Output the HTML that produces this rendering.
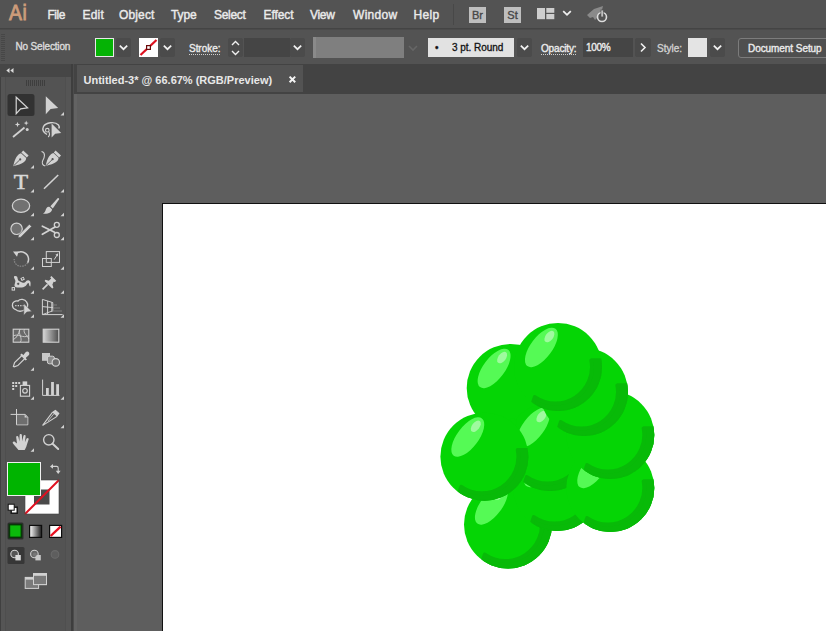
<!DOCTYPE html>
<html lang="en">
<head>
<meta charset="utf-8">
<title>Untitled-3* @ 66.67% (RGB/Preview)</title>
<style>
*{box-sizing:border-box;margin:0;padding:0}
html,body{width:826px;height:631px;overflow:hidden;background:#5d5d5d;font-family:"Liberation Sans",sans-serif;}
#app{position:relative;width:826px;height:631px;overflow:hidden;background:#5d5d5d}
.abs{position:absolute}
#menubar{left:0;top:0;width:826px;height:30px;background:#535353}
#menusep{left:0;top:28px;width:826px;height:2px;background:linear-gradient(to bottom,#444 0,#444 1px,#4b4b4b 1px,#4b4b4b 2px)}
#ctrlbar{left:0;top:30px;width:826px;height:34px;background:#535353}
#strip{left:0;top:64px;width:826px;height:30px;background:#434343}
#tools{left:0;top:64px;width:71px;height:567px;background:linear-gradient(to right,#404040 0,#404040 1px,#555 1px,#555 5.5px,#4e4e4e 5.5px,#4e4e4e 6.5px,#535353 6.5px,#535353 65px,#4f4f4f 65px,#4f4f4f 66px,#555 66px,#555 71px)}
#toolhead{left:0;top:64px;width:71px;height:13px;background:#464646}
#toolsep{left:71px;top:64px;width:3px;height:567px;background:linear-gradient(to right,#3e3e3e 0,#3e3e3e 2px,#4c4c4c 2px,#4c4c4c 3px)}
#tab{left:77px;top:65px;width:226px;height:27px;background:#535353}
#canvas{left:74px;top:94px;width:752px;height:537px;background:#5e5e5e;border-left:3px solid #636363}
#artboard{left:162px;top:203px;width:700px;height:500px;background:#fff;border:1px solid #111}
.mi{position:absolute;top:7px;font-size:12px;line-height:16px;color:#ebebeb;white-space:nowrap;-webkit-text-stroke:0.4px #ebebeb}
.ct{position:absolute;font-size:10px;line-height:12px;color:#e8e8e8;white-space:nowrap;font-weight:bold}

.box{position:absolute}
.chev{position:absolute;width:15px;height:19px;background:#4b4b4b;border-radius:2px}
.chev svg{position:absolute;left:0;top:0}
.lbl{position:absolute;top:42px;font-size:10px;line-height:12px;color:#ececec;white-space:nowrap;-webkit-text-stroke:0.35px currentColor}
.dot{border-bottom:1px dotted #cfcfcf;padding-bottom:0px;line-height:11px}
</style>
</head>
<body>
<div id="app">
  <div id="canvas" class="abs"></div>
  <div id="artboard" class="abs"></div>
<!--GRAPES-->
  <svg id="grapes" class="abs" style="left:0;top:0" width="826" height="631" viewBox="0 0 826 631">
    <defs><clipPath id="gc"><circle r="44"/></clipPath></defs>
    <g transform="translate(508 524.5)"><g><circle r="44" fill="#05d505"/><g clip-path="url(#gc)"><path d="M44.51 -6.65 A45 45 0 0 1 -25.49 37.09 L-23.17 30.08 A36.5 36.5 0 0 0 33.39 -6.65 Z" fill="#08ba08" stroke="#08ba08" stroke-width="4" stroke-linejoin="round"/></g><ellipse cx="-16.6" cy="-19.6" rx="10.7" ry="23.4" transform="rotate(37 -16.6 -19.6)" fill="#55fa55"/><ellipse cx="-8.6" cy="-30.4" rx="3.8" ry="6.6" transform="rotate(37 -8.6 -30.4)" fill="#9ffa9f"/></g></g>
    <g transform="translate(557 487)"><g><circle r="44" fill="#05d505"/><g clip-path="url(#gc)"><path d="M44.51 -6.65 A45 45 0 0 1 -25.49 37.09 L-23.17 30.08 A36.5 36.5 0 0 0 33.39 -6.65 Z" fill="#08ba08" stroke="#08ba08" stroke-width="4" stroke-linejoin="round"/></g><ellipse cx="-16.6" cy="-19.6" rx="10.7" ry="23.4" transform="rotate(37 -16.6 -19.6)" fill="#55fa55"/><ellipse cx="-8.6" cy="-30.4" rx="3.8" ry="6.6" transform="rotate(37 -8.6 -30.4)" fill="#9ffa9f"/></g></g>
    <g transform="translate(510.7 388)"><g><circle r="44" fill="#05d505"/><g clip-path="url(#gc)"><path d="M44.51 -6.65 A45 45 0 0 1 -25.49 37.09 L-23.17 30.08 A36.5 36.5 0 0 0 33.39 -6.65 Z" fill="#08ba08" stroke="#08ba08" stroke-width="4" stroke-linejoin="round"/></g><ellipse cx="-16.6" cy="-19.6" rx="10.7" ry="23.4" transform="rotate(37 -16.6 -19.6)" fill="#55fa55"/><ellipse cx="-8.6" cy="-30.4" rx="3.8" ry="6.6" transform="rotate(37 -8.6 -30.4)" fill="#9ffa9f"/></g></g>
    <g transform="translate(550 447)"><g><circle r="44" fill="#05d505"/><g clip-path="url(#gc)"><path d="M44.51 -6.65 A45 45 0 0 1 -25.49 37.09 L-23.17 30.08 A36.5 36.5 0 0 0 33.39 -6.65 Z" fill="#08ba08" stroke="#08ba08" stroke-width="4" stroke-linejoin="round"/></g><ellipse cx="-16.6" cy="-19.6" rx="10.7" ry="23.4" transform="rotate(37 -16.6 -19.6)" fill="#55fa55"/><ellipse cx="-8.6" cy="-30.4" rx="3.8" ry="6.6" transform="rotate(37 -8.6 -30.4)" fill="#9ffa9f"/></g></g>
    <g transform="translate(610.3 488)"><g><circle r="44" fill="#05d505"/><g clip-path="url(#gc)"><path d="M44.51 -6.65 A45 45 0 0 1 -25.49 37.09 L-23.17 30.08 A36.5 36.5 0 0 0 33.39 -6.65 Z" fill="#08ba08" stroke="#08ba08" stroke-width="4" stroke-linejoin="round"/></g><ellipse cx="-16.6" cy="-19.6" rx="10.7" ry="23.4" transform="rotate(37 -16.6 -19.6)" fill="#55fa55"/><ellipse cx="-8.6" cy="-30.4" rx="3.8" ry="6.6" transform="rotate(37 -8.6 -30.4)" fill="#9ffa9f"/></g></g>
    <g transform="translate(610.3 435)"><g><circle r="44" fill="#05d505"/><g clip-path="url(#gc)"><path d="M44.51 -6.65 A45 45 0 0 1 -25.49 37.09 L-23.17 30.08 A36.5 36.5 0 0 0 33.39 -6.65 Z" fill="#08ba08" stroke="#08ba08" stroke-width="4" stroke-linejoin="round"/></g><ellipse cx="-16.6" cy="-19.6" rx="10.7" ry="23.4" transform="rotate(37 -16.6 -19.6)" fill="#55fa55"/><ellipse cx="-8.6" cy="-30.4" rx="3.8" ry="6.6" transform="rotate(37 -8.6 -30.4)" fill="#9ffa9f"/></g></g>
    <g transform="translate(584 392)"><g><circle r="44" fill="#05d505"/><g clip-path="url(#gc)"><path d="M44.51 -6.65 A45 45 0 0 1 -25.49 37.09 L-23.17 30.08 A36.5 36.5 0 0 0 33.39 -6.65 Z" fill="#08ba08" stroke="#08ba08" stroke-width="4" stroke-linejoin="round"/></g><ellipse cx="-16.6" cy="-19.6" rx="10.7" ry="23.4" transform="rotate(37 -16.6 -19.6)" fill="#55fa55"/><ellipse cx="-8.6" cy="-30.4" rx="3.8" ry="6.6" transform="rotate(37 -8.6 -30.4)" fill="#9ffa9f"/></g></g>
    <g transform="translate(558 367)"><g><circle r="44" fill="#05d505"/><g clip-path="url(#gc)"><path d="M44.51 -6.65 A45 45 0 0 1 -25.49 37.09 L-23.17 30.08 A36.5 36.5 0 0 0 33.39 -6.65 Z" fill="#08ba08" stroke="#08ba08" stroke-width="4" stroke-linejoin="round"/></g><ellipse cx="-16.6" cy="-19.6" rx="10.7" ry="23.4" transform="rotate(37 -16.6 -19.6)" fill="#55fa55"/><ellipse cx="-8.6" cy="-30.4" rx="3.8" ry="6.6" transform="rotate(37 -8.6 -30.4)" fill="#9ffa9f"/></g></g>
    <circle cx="512.5" cy="422.5" r="4" fill="#05d505"/>
    <g transform="translate(484.4 456.7)"><g><circle r="44" fill="#05d505"/><g clip-path="url(#gc)"><path d="M44.51 -6.65 A45 45 0 0 1 -25.49 37.09 L-23.17 30.08 A36.5 36.5 0 0 0 33.39 -6.65 Z" fill="#08ba08" stroke="#08ba08" stroke-width="4" stroke-linejoin="round"/></g><ellipse cx="-16.6" cy="-19.6" rx="10.7" ry="23.4" transform="rotate(37 -16.6 -19.6)" fill="#55fa55"/><ellipse cx="-8.6" cy="-30.4" rx="3.8" ry="6.6" transform="rotate(37 -8.6 -30.4)" fill="#9ffa9f"/></g></g>
  </svg>
<!--/GRAPES-->
  <div id="strip" class="abs"></div>
  <div id="tab" class="abs"><span id="tabtxt" style="position:absolute;top:8.5px;left:6.5px;font-size:11px;line-height:13px;font-weight:bold;color:#e8e8e8;white-space:nowrap">Untitled-3* @ 66.67% (RGB/Preview)</span><svg style="position:absolute;left:211px;top:10px" width="9" height="9" viewBox="0 0 9 9"><path d="M1.6 1.6 L7.2 7.2 M7.2 1.6 L1.6 7.2" stroke="#f4f4f4" stroke-width="2" fill="none"/></svg></div>
  <div id="tools" class="abs"></div>
  <div id="toolhead" class="abs"></div>
  <div id="toolsep" class="abs"></div>
<!--TOOLS-->
  <svg id="toolsvg" class="abs" style="left:0;top:0" width="76" height="631" viewBox="0 0 76 631">
    <defs><linearGradient id="tg" x1="0" x2="1" y1="0" y2="0"><stop offset="0" stop-color="#d6d6d6"/><stop offset="1" stop-color="#4c4c4c"/></linearGradient><linearGradient id="gg" x1="0" x2="1" y1="0" y2="0"><stop offset="0" stop-color="#ffffff"/><stop offset="1" stop-color="#1a1a1a"/></linearGradient></defs>

    <g fill="#d2d2d2" stroke="none">
      <!-- collapse chevrons -->
      <path d="M9.5 68 L6.3 70.5 L9.5 73 Z M13.5 68 L10.3 70.5 L13.5 73 Z" fill="#dadada"/>
      <!-- grip -->
      <g fill="#3e3e3e"><rect x="26" y="80" width="1" height="6"/><rect x="28" y="80" width="1" height="6"/><rect x="30" y="80" width="1" height="6"/><rect x="32" y="80" width="1" height="6"/><rect x="34" y="80" width="1" height="6"/><rect x="36" y="80" width="1" height="6"/><rect x="38" y="80" width="1" height="6"/><rect x="40" y="80" width="1" height="6"/><rect x="42" y="80" width="1" height="6"/><rect x="44" y="80" width="1" height="6"/></g>
      <!-- selected tool bg -->
      <rect x="7.5" y="94" width="27" height="22" rx="2.5" fill="#323232"/>
      <!-- selection arrow -->
      <path d="M16.2 97.2 L16.2 113.6 L20.6 108.8 L27.6 107.8 Z" fill="none" stroke="#d6d6d6" stroke-width="1.2" stroke-linejoin="miter"/>
      <!-- direct selection -->
      <path d="M45.8 96.2 L45.8 114.2 L50.6 109 L58.2 107.9 Z"/>
      <path id="tri" d="M64 112 L64 115.5 L60.5 115.5 Z"/>
      <!-- magic wand -->
      <path d="M13 137 L24.5 127.5" stroke="#d2d2d2" stroke-width="1.8" fill="none"/>
      <path d="M17.5 121.8 L18.2 123.8 L20.2 124.5 L18.2 125.2 L17.5 127.2 L16.8 125.2 L14.8 124.5 L16.8 123.8 Z"/>
      <path d="M26.2 120.6 L26.9 122.4 L28.7 123.1 L26.9 123.8 L26.2 125.6 L25.5 123.8 L23.7 123.1 L25.5 122.4 Z"/>
      <circle cx="27.2" cy="129.6" r="1.5"/>
      <!-- lasso + arrow -->
      <path d="M47 134.5 C43.5 132.5 42 129.5 43.5 126.5 C45.5 122.5 55 121 58.5 125 C59.5 126.3 59.3 127.5 58.8 128.5" fill="none" stroke="#d2d2d2" stroke-width="1.4"/>
      <circle cx="47.3" cy="130.2" r="1.8" fill="none" stroke="#d2d2d2" stroke-width="1.1"/>
      <path d="M48.6 131.5 C49.8 133.2 49.6 135.5 48.2 137" fill="none" stroke="#d2d2d2" stroke-width="1.1"/>
      <path d="M51.6 123.6 L51.6 137.6 L55.2 133.8 L61.2 132.9 Z"/>

      <!-- pen tool -->
      <g id="pen">
        <path d="M23.2 150.6 L28.6 155.6 L26.8 157.6 L21.4 152.6 Z"/>
        <path d="M21 153.2 L26.2 158 C26 161.5 23 164 13.2 166.2 C15 157.5 17.5 154.5 21 153.2 Z"/>
        <path d="M13.6 165.8 L19.6 160" stroke="#535353" stroke-width="0.9" fill="none"/>
        <circle cx="20.2" cy="159.4" r="1.1" fill="#535353"/>
      </g>
      <path d="M34 165 L34 168.5 L30.5 168.5 Z"/>
      <!-- curvature tool -->
      <path d="M41.5 151.5 C46 152.5 44.5 157.5 42.8 160.5 C41.5 163 42.5 165.5 45.2 166" fill="none" stroke="#d2d2d2" stroke-width="1.1"/>
      <g transform="translate(32.4,-0.2)">
        <path d="M23.2 150.6 L28.6 155.6 L26.8 157.6 L21.4 152.6 Z"/>
        <path d="M21 153.2 L26.2 158 C26 161.5 23 164 13.2 166.2 C15 157.5 17.5 154.5 21 153.2 Z"/>
        <path d="M13.6 165.8 L19.6 160" stroke="#535353" stroke-width="0.9" fill="none"/>
        <circle cx="20.2" cy="159.4" r="1.1" fill="#535353"/>
      </g>
      <!-- type tool -->
      <text x="20.9" y="189" font-family="Liberation Serif, serif" font-size="21" text-anchor="middle" fill="#d8d8d8" stroke="#d8d8d8" stroke-width="0.5" textLength="14.4" lengthAdjust="spacingAndGlyphs">T</text>
      <path d="M34 189 L34 192.5 L30.5 192.5 Z"/>
      <!-- line tool -->
      <path d="M44 188.8 L58.2 175" stroke="#d2d2d2" stroke-width="1.6" fill="none"/>
      <path d="M64 189 L64 192.5 L60.5 192.5 Z"/>
      <!-- ellipse tool -->
      <ellipse cx="21" cy="205.8" rx="8.7" ry="6.6" fill="#717171" stroke="#d2d2d2" stroke-width="1.2"/>
      <path d="M34 212.8 L34 216.3 L30.5 216.3 Z"/>
      <!-- paintbrush -->
      <path d="M50.4 206.2 L57.6 198.2 C58.4 197.4 59.6 198.4 59 199.4 L52.8 208.4 Z"/>
      <path d="M49.6 207 L52 209.2 C52 212 49 214.2 43 213.8 C45.5 212.5 45.5 209.5 46.6 208 C47.4 207 48.6 206.6 49.6 207 Z"/>
      <path d="M64 212.8 L64 216.3 L60.5 216.3 Z"/>
      <!-- shaper tool -->
      <circle cx="16.6" cy="228.8" r="5.7" fill="#717171" stroke="#d2d2d2" stroke-width="1.2"/>
      <path d="M18.6 235 L29.4 224.2 L31.6 226.4 L20.8 237.2 L18 237.8 Z" stroke="#535353" stroke-width="0.6"/>
      <path d="M34 236.8 L34 240.3 L30.5 240.3 Z"/>
      <!-- scissors -->
      <path d="M42.4 226.2 L54.6 232.2" stroke="#d2d2d2" stroke-width="1.8" fill="none" stroke-linecap="round"/>
      <path d="M42.4 234.2 L55 227" stroke="#d2d2d2" stroke-width="1.8" fill="none" stroke-linecap="round"/>
      <circle cx="56.8" cy="224.8" r="2.5" fill="none" stroke="#d2d2d2" stroke-width="1.3"/>
      <circle cx="56.8" cy="235" r="2.5" fill="none" stroke="#d2d2d2" stroke-width="1.3"/>
      <path d="M64 236.8 L64 240.3 L60.5 240.3 Z"/>
      <!-- rotate -->
      <path d="M16 253.5 C20 250.5 26 251.5 28 256.5 C29 259 28.6 261 27.6 262.8" fill="none" stroke="#d2d2d2" stroke-width="1.5"/>
      <path d="M13 251.6 L18.6 251.6 L17 256.8 Z"/>
      <path d="M27.6 262.8 C25 267 18.5 267.5 15.5 263.5 C14.5 262 14 260.5 14.2 259" fill="none" stroke="#8a8a8a" stroke-width="1.2" stroke-dasharray="1.5 1"/>
      <path d="M34 266.3 L34 269.8 L30.5 269.8 Z"/>
      <!-- scale -->
      <rect x="46.3" y="251.6" width="13.2" height="10.8" fill="none" stroke="#d2d2d2" stroke-width="1"/>
      <rect x="42.5" y="258.5" width="8.8" height="8" fill="none" stroke="#d2d2d2" stroke-width="1"/>
      <path d="M54.2 259.6 L57.4 254.6" stroke="#d2d2d2" stroke-width="1" fill="none"/>
      <path d="M58.2 253.2 L57.8 256.4 L55.4 254.8 Z"/>
      <path d="M64 266.3 L64 269.8 L60.5 269.8 Z"/>
      <!-- width tool -->
      <path d="M14 276.4 C16.2 275.6 17.4 276.6 17.6 278.4 C17.8 280 18.6 281 20 281.4 C22 282 23.4 283.4 24.6 282.6 C26 281.6 26.6 280 28.4 280.2 C30.2 280.4 30.8 282 30.6 284 C30.4 285.4 30.6 286 30.2 286.4 C29 286 29.4 284.6 28.8 283.4 C28.2 282.4 27.4 283.4 26.8 284.6 C25.8 286.6 23.6 287.6 21 287.4 C18.4 287.2 16 287.6 14.8 286.4 C13.8 285.4 15.4 283 15.4 281 C15.4 279.4 13.6 278 14 276.4 Z"/>
      <circle cx="18.2" cy="283.8" r="1.5" fill="#535353" stroke="#e0e0e0" stroke-width="0.6"/>
      <rect x="21.3" y="277.7" width="2.6" height="2.3" fill="#535353" stroke="#e0e0e0" stroke-width="0.9" transform="rotate(-25 22.6 278.8)"/>
      <rect x="12.1" y="287.6" width="2.5" height="2.5" fill="#535353" stroke="#e0e0e0" stroke-width="0.9"/>
      <path d="M34 290.3 L34 293.8 L30.5 293.8 Z"/>
      <!-- pin -->
      <path d="M51.4 276 L56.2 280.8 L55 282 L53.6 281.8 L52.4 284.4 L53.4 287.8 L52.2 288.6 L44.6 281 L45.4 279.8 L48.8 280.8 L51.2 278.6 L50.2 277.2 Z"/>
      <path d="M47.6 284.4 L42.6 289.4" stroke="#d2d2d2" stroke-width="1.7" fill="none"/>
      <path d="M64 290.3 L64 293.8 L60.5 293.8 Z"/>
      <!-- shape builder -->
      <path d="M12.4 305.5 C12 302 15.5 300.5 18 301 C20 298.6 25 299 26.6 302 C28.6 304.5 27.6 308.5 25 309.6 C22 312 17.5 311.6 15.8 309.6 C13.6 309 12.6 307.5 12.4 305.5 Z" fill="none" stroke="#d2d2d2" stroke-width="1.3"/>
      <rect x="15.2" y="305" width="1.3" height="1.3"/><rect x="17.7" y="305" width="1.3" height="1.3"/><rect x="20.2" y="305" width="1.3" height="1.3"/><rect x="22.7" y="305" width="1.3" height="1.3"/>
      <path d="M23.8 303.6 L23.8 315.2 L26.8 312 L31.8 311.4 Z" stroke="#535353" stroke-width="0.5"/>
      <path d="M34 314.3 L34 317.8 L30.5 317.8 Z"/>
      <!-- perspective grid -->
      <path d="M42.4 299.4 L42.4 314.6 M42.4 299.4 L52.8 302.6 M42.4 306.6 L53 307.6 M42.4 314.6 L62.6 314.6 M47.6 301 L47.6 314 M51.8 302.4 L51.8 311.8" fill="none" stroke="#d2d2d2" stroke-width="1"/>
      <path d="M42.4 314.6 L52.8 310.8 M52.8 302.6 L52.8 310.8" fill="none" stroke="#d2d2d2" stroke-width="0.9"/>
      <path d="M53 305 L57 305 M53 308 L60 308 M52 311 L62 311" fill="none" stroke="#8a8a8a" stroke-width="0.8"/>
      <path d="M64 314.3 L64 317.8 L60.5 317.8 Z"/>
      <!-- mesh -->
      <rect x="13.2" y="329.2" width="15.6" height="13" fill="#6a6a6a" stroke="#d2d2d2" stroke-width="1.1"/>
      <path d="M13.2 336 C18 333 23 339 28.8 335.6 M20 329.2 C17.5 333 23 338 20.4 342.2 M13.2 339.6 C17 338 18.5 334 20 329.2 M24.5 329.2 C22.5 333 28 336 28.8 339" fill="none" stroke="#cfcfcf" stroke-width="0.9"/>
      <!-- gradient -->
      <rect x="43.2" y="329.2" width="15.6" height="13" fill="url(#tg)" stroke="#d2d2d2" stroke-width="1.1"/>
      <!-- eyedropper -->
      <path d="M13.4 366.4 L14.6 362.6 L22.4 355 L25.4 358 L17.8 365.6 L14.2 366.8 Z" fill="none" stroke="#d2d2d2" stroke-width="1.2"/>
      <path d="M21.4 353.6 L23.2 355.2 L25.4 352.4 C26.6 351.2 28.4 351.4 29 352.6 C29.6 353.8 29.4 355 28.2 355.8 L25.6 358 L27 359.6 L25.6 360.6 L20.2 355 Z"/>
      <path d="M34 367.3 L34 370.8 L30.5 370.8 Z"/>
      <!-- blend -->
      <rect x="42" y="353" width="8" height="7.8" fill="#c8c8c8"/>
      <rect x="47.4" y="356.2" width="7" height="7.6" rx="1.8" fill="#8a8a8a" stroke="#d2d2d2" stroke-width="1"/>
      <circle cx="55.8" cy="362.4" r="3.7" fill="#6a6a6a" stroke="#d2d2d2" stroke-width="1.2"/>
      <!-- symbol sprayer -->
      <rect x="12.2" y="382" width="2" height="2"/><rect x="15.2" y="382" width="2" height="2"/><rect x="18.2" y="382" width="2" height="2"/>
      <rect x="12.2" y="385" width="2" height="2"/><rect x="15.2" y="385" width="2" height="2"/>
      <rect x="12.2" y="388" width="2" height="2"/>
      <rect x="22.6" y="381.4" width="4.6" height="3.6"/>
      <rect x="20.4" y="385.4" width="9.2" height="10.8" fill="none" stroke="#d2d2d2" stroke-width="1.1"/>
      <circle cx="25" cy="390.8" r="2.3" fill="none" stroke="#d2d2d2" stroke-width="1.2"/>
      <path d="M34 396.3 L34 399.8 L30.5 399.8 Z"/>
      <!-- column graph -->
      <path d="M42.6 379.6 L42.6 395.4 L59.4 395.4" fill="none" stroke="#d2d2d2" stroke-width="1"/>
      <rect x="46" y="388" width="2.8" height="7"/>
      <rect x="51.1" y="382" width="2.8" height="13"/>
      <rect x="56.2" y="384.2" width="2.8" height="10.8"/>
      <path d="M64 396.3 L64 399.8 L60.5 399.8 Z"/>
      <!-- artboard -->
      <path d="M16.5 409 L16.5 424.8 L27.8 424.8 L27.8 417 L25 414.4 L10.6 414.4" fill="none" stroke="#d2d2d2" stroke-width="1"/>
      <path d="M17 415 L24.6 415 L27.2 417.4 L27.2 424.2 L17 424.2 Z" fill="#6e6e6e"/>
      <path d="M24.6 414.6 L24.6 417.4 L27.6 417.4 Z"/>
      <!-- slice -->
      <path d="M42.6 425.4 L52.2 412.6 L55.4 410.4 L58.8 413.4 L56.6 416.6 L44 424.6 Z" fill="none" stroke="#d2d2d2" stroke-width="1.1"/>
      <path d="M52.4 412.4 L55.4 410.2 L58.8 413.4 L56.8 416.2 Z"/>
      <path d="M48 421 L54 413.6" stroke="#d2d2d2" stroke-width="0.8" fill="none"/>
      <path d="M64 424.8 L64 428.3 L60.5 428.3 Z"/>
      <!-- hand -->
      <path d="M17 443.5 L16.2 437.4 C16 435.8 18 435.4 18.4 437 L19.4 441.4 L19.6 435.4 C19.6 433.6 21.8 433.6 21.9 435.4 L22.2 441.2 L23.4 436 C23.8 434.4 25.8 434.8 25.6 436.4 L24.9 442.2 L26.6 438.6 C27.4 437.2 29.2 438 28.6 439.6 L26.8 445 C26.2 447.6 25.2 449 24.6 450 L18.4 450 C17.4 448.4 15.2 446 13 443.4 C12 442 13.8 440.8 15 442 Z"/>
      <path d="M34 448.3 L34 451.8 L30.5 451.8 Z"/>
      <!-- zoom -->
      <circle cx="48.8" cy="439.8" r="5.2" fill="none" stroke="#d2d2d2" stroke-width="1.4"/>
      <path d="M52.6 443.8 L58.2 449" stroke="#d2d2d2" stroke-width="2" fill="none" stroke-linecap="round"/>
      <!-- stroke swatch -->
      <rect x="25" y="480" width="34" height="34" fill="#ffffff"/>
      <rect x="34" y="489.5" width="15.5" height="15" fill="#4a4a4a"/>
      <path d="M59 480 L25 514" stroke="#e01020" stroke-width="2" fill="none"/>
      <rect x="25" y="480" width="34" height="34" fill="none" stroke="#444" stroke-width="0.6"/>
      <!-- fill swatch -->
      <rect x="7.5" y="462.5" width="33" height="33" fill="#00b400" stroke="#f0f0f0" stroke-width="1"/>
      <!-- swap -->
      <path d="M52 466.4 L56.6 466.4 C57.6 466.4 58.2 467 58.2 468 L58.2 471" fill="none" stroke="#d2d2d2" stroke-width="1.1"/>
      <path d="M50 466.4 L53 464 L53 468.8 Z"/>
      <path d="M58.2 474 L55.8 470.8 L60.6 470.8 Z"/>
      <!-- default fill/stroke -->
      <rect x="11.2" y="507.2" width="6" height="6" fill="#fff" stroke="#111" stroke-width="1.4"/>
      <rect x="8.2" y="504.2" width="6" height="6" fill="#fff" stroke="#111" stroke-width="1"/>
      <!-- color / gradient / none -->
      <rect x="7.5" y="522.5" width="16" height="17" rx="1.5" fill="#2e2e2e"/>
      <rect x="9.4" y="524.6" width="12" height="12.8" fill="#0bbb0b" stroke="#073807" stroke-width="1.6"/>
      <rect x="29.6" y="525.4" width="12" height="12" fill="url(#gg)" stroke="#0c0c0c" stroke-width="1.2"/>
      <rect x="49.6" y="525.4" width="12" height="12" fill="#fff" stroke="#0c0c0c" stroke-width="1.2"/>
      <path d="M50.6 536 L60.6 526.6" stroke="#e81020" stroke-width="2.4" fill="none"/>
      <!-- drawing modes -->
      <rect x="7.5" y="547" width="17" height="17" rx="1.5" fill="#373737"/>
      <circle cx="14.6" cy="554" r="3.8" fill="#555" stroke="#d2d2d2" stroke-width="1.1"/>
      <rect x="15.4" y="555" width="5.4" height="5.4" fill="#d8d8d8"/>
      <circle cx="34.4" cy="554" r="3.8" fill="#666" stroke="#cfcfcf" stroke-width="1.1"/>
      <rect x="35.4" y="555" width="5.4" height="5.4" fill="#c8c8c8"/>
      <circle cx="34.8" cy="554.4" r="2" fill="#777"/>
      <circle cx="55" cy="554.4" r="3.8" fill="#5e5e5e" stroke="#6a6a6a" stroke-width="1.1"/>
      <!-- screen mode -->
      <rect x="33.5" y="573.6" width="13" height="11" fill="#7a7a7a" stroke="#d2d2d2" stroke-width="1"/>
      <rect x="33.5" y="573.6" width="13" height="2.2" fill="#d2d2d2"/>
      <rect x="25.2" y="577.4" width="13.4" height="11" fill="#7a7a7a" stroke="#d2d2d2" stroke-width="1"/>
      <rect x="25.2" y="577.4" width="13.4" height="2.2" fill="#d2d2d2"/>
      <rect x="33.5" y="573.6" width="13" height="11" fill="#7a7a7a" stroke="#d2d2d2" stroke-width="1"/>
      <rect x="33.5" y="573.6" width="13" height="2.2" fill="#d2d2d2"/>
    </g>
  </svg>
<!--/TOOLS-->
  <div id="menubar" class="abs">
    <div class="box" style="left:8.5px;top:0px;font-size:22.5px;line-height:25px;color:#cd9c7a;font-weight:normal;letter-spacing:0.6px;-webkit-text-stroke:0.9px #cd9c7a;transform:scaleX(0.86);transform-origin:0 0">Ai</div>
    <div class="box" style="left:453px;top:4px;width:1px;height:21px;background:#484848"></div>
    <div class="box" style="left:469px;top:7px;width:17px;height:16px;background:#bebebe;color:#474747;font-size:11px;line-height:17px;text-align:center;-webkit-text-stroke:0.35px #474747">Br</div>
    <div class="box" style="left:504px;top:7px;width:17px;height:16px;background:#bebebe;color:#474747;font-size:11px;line-height:17px;text-align:center;-webkit-text-stroke:0.35px #474747">St</div>
    <svg class="box" style="left:537px;top:8px" width="18" height="13" viewBox="0 0 18 13"><rect x="0" y="0" width="8" height="11.2" fill="#cecece"/><rect x="9.3" y="0" width="8" height="4.8" fill="#cecece"/><rect x="9.3" y="6" width="8" height="5.2" fill="#cecece"/></svg>
    <svg class="box" style="left:561px;top:8px" width="12" height="10" viewBox="0 0 12 10"><path d="M2.2 3.2 L6 6.8 L9.8 3.2" fill="none" stroke="#f0f0f0" stroke-width="1.8"/></svg>
    <svg class="box" style="left:586px;top:5px" width="24" height="20" viewBox="0 0 24 20"><path d="M1 10 L8 4 L17 1 L15 9 L9 15 L7 12 L4 13 Z" fill="#8a8a8a"/><circle cx="16" cy="12" r="4.5" fill="#535353" stroke="#dcdcdc" stroke-width="1.6"/><rect x="15" y="5" width="2.2" height="7" fill="#dcdcdc" stroke="#535353" stroke-width="0.8"/></svg>
    <span class="mi" style="left:47.5px;letter-spacing:-0.461px">File</span>
    <span class="mi" style="left:82.5px;letter-spacing:0.203px">Edit</span>
    <span class="mi" style="left:119px;letter-spacing:0.135px">Object</span>
    <span class="mi" style="left:171px;letter-spacing:-0.129px">Type</span>
    <span class="mi" style="left:214px;letter-spacing:-0.31px">Select</span>
    <span class="mi" style="left:263.5px;letter-spacing:-0.078px">Effect</span>
    <span class="mi" style="left:310px;letter-spacing:-0.324px">View</span>
    <span class="mi" style="left:353px;letter-spacing:0.302px">Window</span>
    <span class="mi" style="left:413.5px;letter-spacing:0.328px">Help</span>
  </div>
  <div id="menusep" class="abs"></div>
  <div id="ctrlbar" class="abs">
    <div class="box" style="left:1px;top:4px;width:4px;height:28px;background:repeating-linear-gradient(to bottom,#474747 0,#474747 1px,#535353 1px,#535353 2px)"></div>
  </div>
  <span class="lbl" style="left:15.5px;top:41px;letter-spacing:-0.167px;color:#dcdcdc">No Selection</span>
  <div class="box" style="left:95px;top:38px;width:19px;height:19px;background:#05b305;border:1px solid #e8e8e8"></div>
  <div class="chev" style="left:116px;top:38px"><svg width="15" height="19" viewBox="0 0 15 19"><path d="M3.8 7.6 L7.5 11.2 L11.2 7.6" fill="none" stroke="#f2f2f2" stroke-width="1.7"/></svg></div>
  <div class="box" style="left:139px;top:38px;width:19px;height:19px;background:#fff;overflow:hidden">
    <svg width="19" height="19" viewBox="0 0 19 19"><path d="M1.5 17 L17.5 2" stroke="#de1220" stroke-width="2.3"/><rect x="7.6" y="7.6" width="3.8" height="3.8" fill="#fff" stroke="#6a0808" stroke-width="1.2"/></svg>
  </div>
  <div class="chev" style="left:160px;top:38px"><svg width="15" height="19" viewBox="0 0 15 19"><path d="M3.8 7.6 L7.5 11.2 L11.2 7.6" fill="none" stroke="#f2f2f2" stroke-width="1.7"/></svg></div>
  <span class="lbl dot" style="left:189px;top:43px;letter-spacing:-0.041px">Stroke:</span>
  <div class="box" style="left:228px;top:38px;width:15px;height:19px;background:#4b4b4b;border-radius:2px"><svg width="15" height="20" viewBox="0 0 15 20"><path d="M4 7 L7.5 3.5 L11 7 M4 13 L7.5 16.5 L11 13" fill="none" stroke="#f0f0f0" stroke-width="1.4"/></svg></div>
  <div class="box" style="left:244px;top:38px;width:46px;height:19px;background:#454545"></div>
  <div class="chev" style="left:290px;top:38px"><svg width="15" height="19" viewBox="0 0 15 19"><path d="M3.8 7.6 L7.5 11.2 L11.2 7.6" fill="none" stroke="#f2f2f2" stroke-width="1.7"/></svg></div>
  <div class="box" style="left:313px;top:37px;width:91px;height:21px;background:#7f7f7f;border-left:3px solid #8a8a8a"></div>
  <div class="box" style="left:405px;top:38px;width:16px;height:19px"><svg width="16" height="19" viewBox="0 0 16 19"><path d="M4 8 L8 12 L12 8" fill="none" stroke="#666" stroke-width="1.6"/></svg></div>
  <div class="box" style="left:428px;top:38px;width:86px;height:19px;background:#e2e2e2;color:#111;font-size:10px;line-height:20px;letter-spacing:-0.03px;-webkit-text-stroke:0.3px #111"><span style="position:absolute;left:7px;top:0">•</span><span style="position:absolute;left:24px;top:0;white-space:nowrap">3 pt. Round</span></div>
  <div class="chev" style="left:517px;top:38px"><svg width="15" height="19" viewBox="0 0 15 19"><path d="M3.8 7.6 L7.5 11.2 L11.2 7.6" fill="none" stroke="#f2f2f2" stroke-width="1.7"/></svg></div>
  <span class="lbl dot" style="left:541px;top:43px;letter-spacing:-0.161px">Opacity:</span>
  <div class="box" style="left:583px;top:38px;width:50px;height:19px;background:#454545"></div>
  <span class="lbl" style="left:586px;top:42px;letter-spacing:-0.32px">100%</span>
  <div class="box" style="left:635px;top:38px;width:16px;height:19px;background:#4a4a4a;border-radius:2px"><svg width="16" height="19" viewBox="0 0 16 19"><path d="M6 5.5 L10 9.5 L6 13.5" fill="none" stroke="#f0f0f0" stroke-width="1.6"/></svg></div>
  <span class="lbl" style="left:657px;top:42.5px;letter-spacing:-0.003px;color:#d0d0d0">Style:</span>
  <div class="box" style="left:688px;top:38px;width:19px;height:19px;background:#e4e4e4"></div>
  <div class="chev" style="left:710px;top:38px"><svg width="15" height="19" viewBox="0 0 15 19"><path d="M3.8 7.6 L7.5 11.2 L11.2 7.6" fill="none" stroke="#f2f2f2" stroke-width="1.7"/></svg></div>
  <div class="box" style="left:738px;top:38px;width:100px;height:20px;border:1px solid #7c7c7c;border-radius:3px;background:#4f4f4f"></div>
  <span class="lbl" style="left:748px;top:42.5px;letter-spacing:-0.064px">Document Setup</span>
</div>
</body>
</html>
